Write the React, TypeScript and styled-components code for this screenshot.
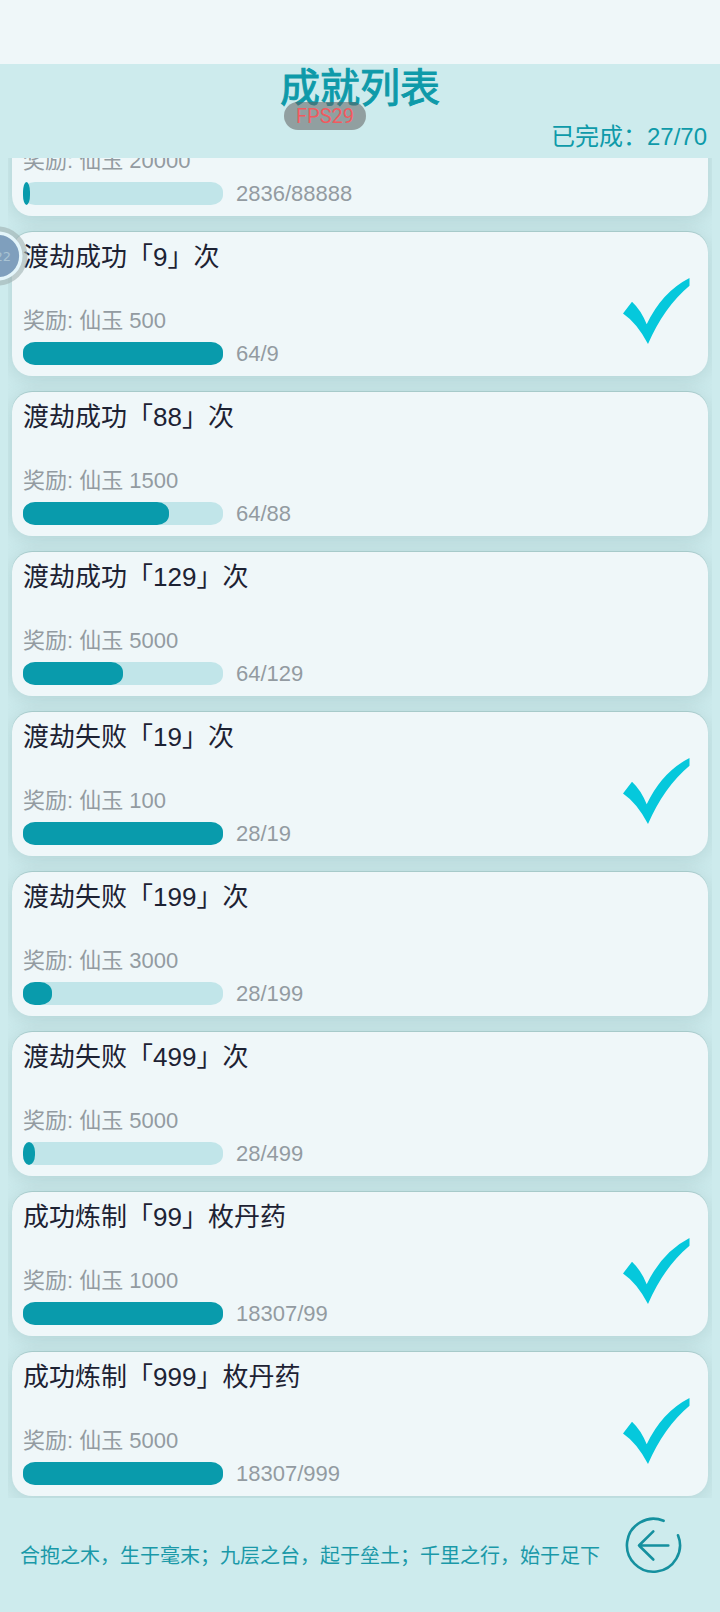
import React, { useLayoutEffect, useRef } from "react";
import styled, { createGlobalStyle } from "styled-components";

const GlobalStyle = createGlobalStyle`
  *, *::before, *::after { box-sizing: border-box; }
  body {
    margin: 0;
    background: #cdebed;
    font-family: "Liberation Sans", "Noto Sans CJK SC", sans-serif;
  }
  h1, h2, p, ul { margin: 0; padding: 0; font-weight: 400; }
`;

const Page = styled.main`
  position: relative;
  display: flex;
  flex-direction: column;
  height: 100vh;
  overflow: hidden;
`;

const StatusStrip = styled.div`
  flex: none;
  height: 64px;
  background: #eff7f9;
`;

const Header = styled.header`
  flex: none;
  display: flex;
  flex-direction: column;
  height: 94px;
  color: #0e9aa9;
`;

const Title = styled.h1`
  position: relative;
  align-self: center;
  font-size: 40px;
  line-height: 42px;
  font-family: "Noto Sans CJK SC", sans-serif;
  -webkit-text-stroke: 1px currentColor;
`;

const Completed = styled.p`
  padding: 15px 13px 0;
  text-align: right;
  font-size: 24px;
  line-height: 32px;
`;

const FpsBadge = styled.span`
  position: absolute;
  top: 38px;
  left: 4px;
  width: 82px;
  border-radius: 14px;
  background: rgba(96, 96, 96, 0.55);
  color: #f15a5f;
  font-family: Roboto, sans-serif;
  font-size: 20px;
  line-height: 28px;
  text-align: center;
  -webkit-text-stroke: 0;
`;

const List = styled.ul`
  flex: 1;
  min-height: 0;
  display: flex;
  flex-direction: column;
  gap: 16px;
  margin: 0 8px;
  padding: 0 4px 2px;
  overflow-y: auto;
  scrollbar-width: none;
  list-style: none;
`;

const Card = styled.li`
  flex: none;
  display: flex;
  justify-content: space-between;
  align-items: center;
  height: 144px;
  padding: 0 18px 0 11px;
  border-radius: 20px;
  background: #eff7f9;
  box-shadow: 0 -1px 0 rgba(90, 140, 135, 0.25), 0 3px 20px rgba(60, 100, 100, 0.18);
`;

const Details = styled.div`
  display: flex;
  flex-direction: column;
  align-self: flex-start;
  padding-top: 9px;
`;

const Name = styled.h2`
  color: #1d2233;
  font-size: 26px;
  line-height: 32px;
`;

const Reward = styled.p`
  margin-top: 32px;
  color: #939ba1;
  font-size: 22px;
  line-height: 32px;
`;

const ProgressRow = styled.div`
  display: flex;
  align-items: center;
  gap: 13px;
  height: 33px;
`;

const Track = styled.div`
  width: 200px;
  height: 23px;
  border-radius: 12px / 10px;
  background: #c1e5e9;
`;

const Fill = styled.div`
  height: 100%;
  border-radius: min(50%, 12px) / 10px;
  background: #099bac;
`;

const Amount = styled.span`
  color: #939ba1;
  font-size: 22px;
  line-height: 33px;
`;

const CheckMark = styled.svg`
  flex: none;
  width: 67px;
  height: 67px;
  margin-top: 14px;
  fill: #05c8dc;
`;

const Footer = styled.footer`
  flex: none;
  display: flex;
  align-items: center;
  justify-content: space-between;
  height: 114px;
  padding: 0 36px 16px 20px;
  color: #1a99a8;
`;

const Motto = styled.p`
  padding-top: 18px;
  font-size: 20px;
  line-height: 32px;
`;

const BackButton = styled.button`
  width: 60px;
  height: 60px;
  padding: 0;
  border: 0;
  background: none;
  color: #15909f;
  cursor: pointer;

  svg { display: block; }
`;

const FloatingBall = styled.div`
  position: absolute;
  top: 226px;
  left: -32px;
  width: 60px;
  height: 60px;

  svg { display: block; }
`;

type Achievement = { name: string; reward: number; current: number; goal: number };

const achievements: Achievement[] = [
  { name: "击杀「88888」次", reward: 20000, current: 2836, goal: 88888 },
  { name: "渡劫成功「9」次", reward: 500, current: 64, goal: 9 },
  { name: "渡劫成功「88」次", reward: 1500, current: 64, goal: 88 },
  { name: "渡劫成功「129」次", reward: 5000, current: 64, goal: 129 },
  { name: "渡劫失败「19」次", reward: 100, current: 28, goal: 19 },
  { name: "渡劫失败「199」次", reward: 3000, current: 28, goal: 199 },
  { name: "渡劫失败「499」次", reward: 5000, current: 28, goal: 499 },
  { name: "成功炼制「99」枚丹药", reward: 1000, current: 18307, goal: 99 },
  { name: "成功炼制「999」枚丹药", reward: 5000, current: 18307, goal: 999 },
];

function AchievementCard({ name, reward, current, goal }: Achievement) {
  const ratio = Math.min(1, current / goal);
  return (
    <Card>
      <Details>
        <Name>{name}</Name>
        <Reward>奖励: 仙玉 {reward}</Reward>
        <ProgressRow>
          <Track
            role="progressbar"
            aria-label={name}
            aria-valuemin={0}
            aria-valuemax={goal}
            aria-valuenow={Math.min(current, goal)}
          >
            <Fill style={{ width: `${Math.ceil(ratio * 200) / 2}%` }} />
          </Track>
          <Amount>{`${current}/${goal}`}</Amount>
        </ProgressRow>
      </Details>
      {ratio === 1 && (
        <CheckMark viewBox="0 0 67 67" role="img" aria-label="已完成">
          <path d="M0 35.5L9 23.7Q18 32 23.7 46.3Q39 14 66.5 0V7.7Q41 29 25 66Q14 45 0 35.5Z" />
        </CheckMark>
      )}
    </Card>
  );
}

export default function App() {
  const listRef = useRef<HTMLUListElement>(null);

  useLayoutEffect(() => {
    const list = listRef.current;
    if (list) list.scrollTop = list.scrollHeight;
  }, []);

  return (
    <>
      <GlobalStyle />
      <Page>
        <StatusStrip />
        <Header>
          <Title>
            成就列表
            <FpsBadge>FPS29</FpsBadge>
          </Title>
          <Completed>已完成：27/70</Completed>
        </Header>
        <List ref={listRef}>
          {achievements.map((item) => (
            <AchievementCard key={item.name} {...item} />
          ))}
        </List>
        <Footer>
          <Motto>合抱之木，生于毫末；九层之台，起于垒土；千里之行，始于足下</Motto>
          <BackButton type="button" aria-label="返回">
            <svg width="60" height="60" viewBox="0 0 60 60" fill="none" stroke="currentColor" strokeWidth="2.6" strokeLinecap="round" strokeLinejoin="round">
              <path d="M39.6 3.8A26.5 26.5 0 1 0 54 18.3" />
              <path d="M44.3 28.5H15M29.3 14.3L15 28.5L29.3 42.5" />
            </svg>
          </BackButton>
        </Footer>
        <FloatingBall>
          <svg width="60" height="60" viewBox="0 0 60 60">
            <circle cx="30" cy="30" r="29.5" fill="#9fb0b0" fillOpacity="0.6" />
            <circle cx="30" cy="30" r="22.8" fill="#7f9fbd" stroke="#e4f5fa" strokeWidth="3.4" />
            <text x="43" y="35" textAnchor="end" fontFamily="'DejaVu Sans', sans-serif" fontSize="13" fill="#a9c3d3">22</text>
          </svg>
        </FloatingBall>
      </Page>
    </>
  );
}
